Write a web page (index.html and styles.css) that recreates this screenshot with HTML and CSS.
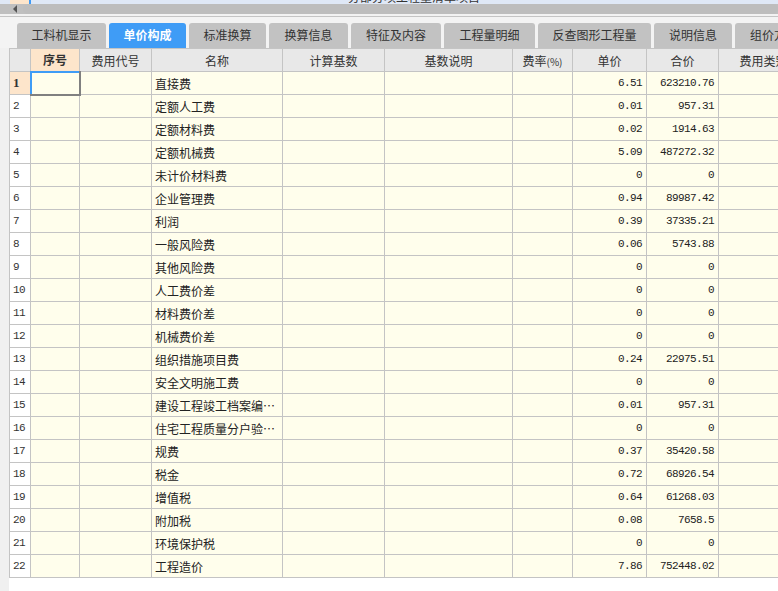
FILE: index.html
```html
<!DOCTYPE html>
<html lang="zh-CN">
<head>
  <meta charset="UTF-8">
  <title>单价构成</title>
  <link rel="stylesheet" href="styles.css">
</head>
<body>
  <div class="page">
    <div class="top-strip">
      <span class="top-num"></span>
      <span class="top-sel"></span>
      <span class="top-text">分部分项工程量清单项目</span>
    </div>
    <div class="hscroll">
      <span class="arrow-left"></span>
      <span class="thumb"></span>
    </div>
    <div class="split"></div>

    <div class="tabs">
      <div class="tab w89">工料机显示</div>
      <div class="tab active w77">单价构成</div>
      <div class="tab w77">标准换算</div>
      <div class="tab w79">换算信息</div>
      <div class="tab w90">特征及内容</div>
      <div class="tab w91">工程量明细</div>
      <div class="tab w113">反查图形工程量</div>
      <div class="tab w78">说明信息</div>
      <div class="tab w78">组价方案</div>
    </div>

    <table class="grid">
      <colgroup>
        <col style="width:21px">
        <col style="width:49px">
        <col style="width:72px">
        <col style="width:131px">
        <col style="width:102px">
        <col style="width:128px">
        <col style="width:60px">
        <col style="width:74px">
        <col style="width:72px">
        <col style="width:90px">
      </colgroup>
      <thead>
        <tr>
          <th class="corner"></th>
          <th class="sel">序号</th>
          <th>费用代号</th>
          <th>名称</th>
          <th>计算基数</th>
          <th>基数说明</th>
          <th>费率<small>(%)</small></th>
          <th>单价</th>
          <th>合价</th>
          <th>费用类别</th>
        </tr>
      </thead>
      <tbody>
        <tr><td class="rn cur">1</td><td class="focus"></td><td></td><td>直接费</td><td></td><td></td><td></td><td class="num">6.51</td><td class="num">623210.76</td><td></td></tr>
        <tr><td class="rn">2</td><td></td><td></td><td>定额人工费</td><td></td><td></td><td></td><td class="num">0.01</td><td class="num">957.31</td><td></td></tr>
        <tr><td class="rn">3</td><td></td><td></td><td>定额材料费</td><td></td><td></td><td></td><td class="num">0.02</td><td class="num">1914.63</td><td></td></tr>
        <tr><td class="rn">4</td><td></td><td></td><td>定额机械费</td><td></td><td></td><td></td><td class="num">5.09</td><td class="num">487272.32</td><td></td></tr>
        <tr><td class="rn">5</td><td></td><td></td><td>未计价材料费</td><td></td><td></td><td></td><td class="num">0</td><td class="num">0</td><td></td></tr>
        <tr><td class="rn">6</td><td></td><td></td><td>企业管理费</td><td></td><td></td><td></td><td class="num">0.94</td><td class="num">89987.42</td><td></td></tr>
        <tr><td class="rn">7</td><td></td><td></td><td>利润</td><td></td><td></td><td></td><td class="num">0.39</td><td class="num">37335.21</td><td></td></tr>
        <tr><td class="rn">8</td><td></td><td></td><td>一般风险费</td><td></td><td></td><td></td><td class="num">0.06</td><td class="num">5743.88</td><td></td></tr>
        <tr><td class="rn">9</td><td></td><td></td><td>其他风险费</td><td></td><td></td><td></td><td class="num">0</td><td class="num">0</td><td></td></tr>
        <tr><td class="rn">10</td><td></td><td></td><td>人工费价差</td><td></td><td></td><td></td><td class="num">0</td><td class="num">0</td><td></td></tr>
        <tr><td class="rn">11</td><td></td><td></td><td>材料费价差</td><td></td><td></td><td></td><td class="num">0</td><td class="num">0</td><td></td></tr>
        <tr><td class="rn">12</td><td></td><td></td><td>机械费价差</td><td></td><td></td><td></td><td class="num">0</td><td class="num">0</td><td></td></tr>
        <tr><td class="rn">13</td><td></td><td></td><td>组织措施项目费</td><td></td><td></td><td></td><td class="num">0.24</td><td class="num">22975.51</td><td></td></tr>
        <tr><td class="rn">14</td><td></td><td></td><td>安全文明施工费</td><td></td><td></td><td></td><td class="num">0</td><td class="num">0</td><td></td></tr>
        <tr><td class="rn">15</td><td></td><td></td><td>建设工程竣工档案编…</td><td></td><td></td><td></td><td class="num">0.01</td><td class="num">957.31</td><td></td></tr>
        <tr><td class="rn">16</td><td></td><td></td><td>住宅工程质量分户验…</td><td></td><td></td><td></td><td class="num">0</td><td class="num">0</td><td></td></tr>
        <tr><td class="rn">17</td><td></td><td></td><td>规费</td><td></td><td></td><td></td><td class="num">0.37</td><td class="num">35420.58</td><td></td></tr>
        <tr><td class="rn">18</td><td></td><td></td><td>税金</td><td></td><td></td><td></td><td class="num">0.72</td><td class="num">68926.54</td><td></td></tr>
        <tr><td class="rn">19</td><td></td><td></td><td>增值税</td><td></td><td></td><td></td><td class="num">0.64</td><td class="num">61268.03</td><td></td></tr>
        <tr><td class="rn">20</td><td></td><td></td><td>附加税</td><td></td><td></td><td></td><td class="num">0.08</td><td class="num">7658.5</td><td></td></tr>
        <tr><td class="rn">21</td><td></td><td></td><td>环境保护税</td><td></td><td></td><td></td><td class="num">0</td><td class="num">0</td><td></td></tr>
        <tr><td class="rn">22</td><td></td><td></td><td>工程造价</td><td></td><td></td><td></td><td class="num">7.86</td><td class="num">752448.02</td><td></td></tr>
      </tbody>
    </table>
  </div>
</body>
</html>
```

FILE: styles.css
```css
* {
  margin: 0;
  padding: 0;
  box-sizing: border-box;
}

html, body {
  width: 778px;
  height: 591px;
  overflow: hidden;
}

body {
  font-family: "Noto Sans CJK SC", "Noto Sans", sans-serif;
  font-size: 12px;
  color: #222;
  background-color: #fff;
}

.page {
  height: 591px;
  background: linear-gradient(to right, #f0f0f0 9px, #fff 9px);
}

/* strip of the grid above, mostly scrolled away */
.top-strip {
  position: relative;
  height: 4px;
  overflow: hidden;
  background-color: #dfe8f6;
}

.top-num {
  position: absolute;
  left: 10px;
  top: 0;
  width: 19px;
  height: 4px;
  background-color: #fde5cb;
}

.top-sel {
  position: absolute;
  left: 29px;
  top: 0;
  width: 2px;
  height: 4px;
  background-color: #3d9af7;
}

.top-text {
  position: absolute;
  left: 348px;
  top: -12px;
  font-size: 12px;
  color: #333;
  white-space: nowrap;
}

.hscroll {
  display: flex;
  align-items: center;
  height: 10px;
  background-color: #bfbfbf;
}

.arrow-left {
  width: 0;
  height: 0;
  margin-left: 13px;
  border-top: 4px solid transparent;
  border-bottom: 4px solid transparent;
  border-right: 4px solid #555;
}

.thumb {
  flex: 1;
  height: 10px;
  margin-left: 6px;
  border-radius: 5px;
  background-color: #bdbdbd;
}

.split {
  height: 3px;
  border-top: 2px solid #f2f2f2;
  border-bottom: 1px solid #c4c4c4;
}

.tabs {
  display: flex;
  gap: 3px;
  height: 31px;
  padding: 6px 0 0 17px;
  background-color: #f3f3f3;
  white-space: nowrap;
}

.tab {
  flex: none;
  height: 25px;
  line-height: 24px;
  text-align: center;
  font-size: 12px;
  color: #333;
  background-color: #c2c2c2;
  border-radius: 3px 3px 0 0;
}

.tab.active {
  color: #fff;
  font-weight: bold;
  background-color: #3f9cf6;
}

.w77 { width: 77px; }
.w78 { width: 78px; }
.w79 { width: 79px; }
.w89 { width: 89px; }
.w90 { width: 90px; }
.w91 { width: 91px; }
.w113 { width: 113px; }

.grid {
  margin-left: 9px;
  border-collapse: collapse;
  table-layout: fixed;
  width: 799px;
}

.grid th,
.grid td {
  height: 23px;
  border: 1px solid #c4c4c4;
  white-space: nowrap;
  overflow: hidden;
  padding: 0 3px;
}

.grid th {
  font-weight: normal;
  font-size: 12px;
  color: #333;
  background-color: #e8e8e8;
}

.grid th small {
  font-size: 10px;
}

.grid th.sel {
  font-weight: bold;
  background-color: #fde5cb;
}

.grid td {
  background-color: #fffeec;
  font-size: 12px;
}

.grid td.rn {
  padding-left: 3px;
  font-family: "Liberation Mono", monospace;
  font-size: 11px;
  letter-spacing: -0.6px;
  color: #333;
  background-color: #fff;
}

.grid td.rn.cur {
  font-family: "Liberation Serif", serif;
  font-size: 13px;
  font-weight: bold;
  letter-spacing: 0;
  background-color: #fde5cb;
}

.grid td.focus {
  border-top: 2px solid #3f9cf6;
  border-left: 2px solid #3f9cf6;
  border-right: 2px solid #808080;
  border-bottom: 2px solid #808080;
}

.grid td.num {
  text-align: right;
  font-family: "Liberation Mono", monospace;
  font-size: 11px;
  letter-spacing: -0.6px;
  padding-right: 4px;
}
```
